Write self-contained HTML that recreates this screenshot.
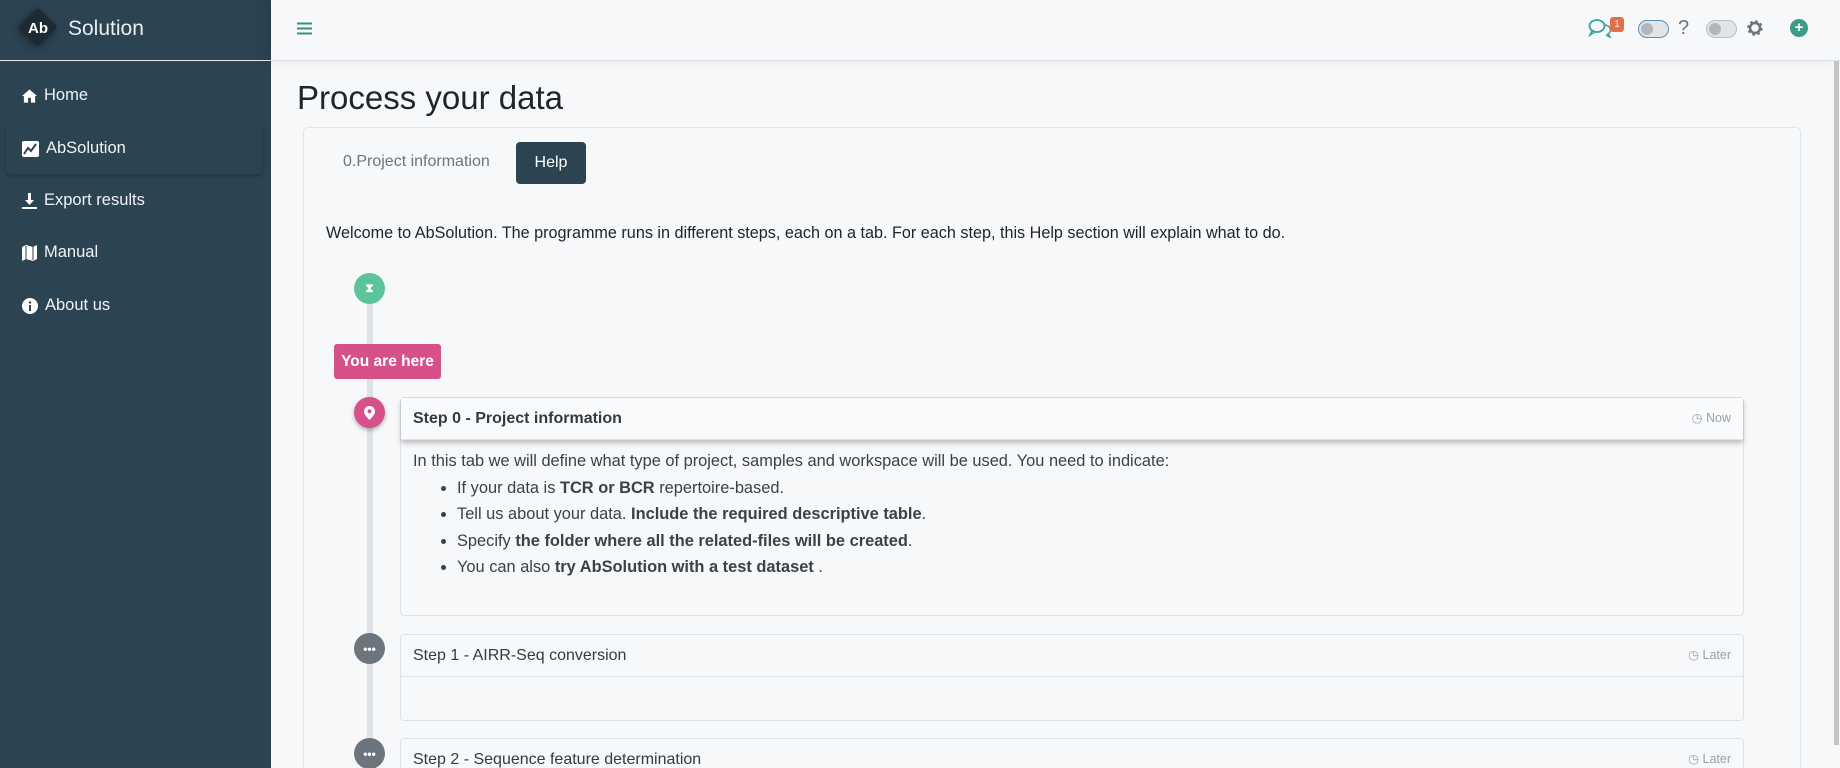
<!DOCTYPE html>
<html><head><meta charset="utf-8"><style>
*{box-sizing:border-box;margin:0;padding:0}
html,body{width:1840px;height:768px;overflow:hidden}
body{background:#f7f8fa;font-family:"Liberation Sans",sans-serif;color:#343a40;position:relative}
.sb{position:absolute;left:0;top:0;width:271px;height:768px;background:#2c4352;color:#fff}
.logo{height:61px;border-bottom:1px solid #e6e9ec;position:relative}
.logo .d{position:absolute;left:24px;top:13px;width:28px;height:28px;background:#1c2a33;transform:rotate(45deg);border-radius:3px;box-shadow:0 3px 8px rgba(0,0,0,.4)}
.logo .ab{position:absolute;left:28px;top:20px;font-weight:bold;font-size:15px}
.logo .t{position:absolute;left:68px;top:17px;font-size:21px;color:#e8eef2}
.mi{position:absolute;left:22px;font-size:16.5px;color:#f0f3f5;display:flex;align-items:center;gap:7px}
.act{position:absolute;left:6px;top:122px;width:256px;height:52px;border-radius:4px;box-shadow:0 2px 3px rgba(0,0,0,.25)}
.top{position:absolute;left:271px;top:0;right:0;height:61px;border-bottom:1px solid #dee2e6;box-shadow:-6px 0 10px rgba(0,0,0,.08)}
h1{position:absolute;left:297px;top:79px;font-weight:normal;font-size:33px;color:#212529}
.card{position:absolute;left:303px;top:127px;width:1498px;height:700px;border:1px solid #e1e4e8;border-radius:5px;background:#f7f8fa}
.tab{position:absolute;left:343px;top:153px;font-size:16px;color:#6c757d}
.help{position:absolute;left:516px;top:142px;width:70px;height:42px;background:#2c4352;color:#fff;border-radius:4px;font-size:16px;text-align:center;line-height:42px}
.wel{position:absolute;left:326px;top:224px;font-size:16.2px;color:#212529}
.line{position:absolute;left:367px;top:290px;width:6px;height:478px;background:#dee2e6}
.circ{position:absolute;width:31px;height:31px;border-radius:50%;color:#fff;display:flex;align-items:center;justify-content:center;font-weight:bold;font-size:12px}
.badge{position:absolute;left:334px;top:344px;width:107px;height:35px;background:#d6518a;color:#fff;font-weight:bold;font-size:15.5px;border-radius:3px;line-height:35px;text-align:center}
.sc{position:absolute;left:400px;width:1344px;border:1px solid #dee2e6;border-radius:4px;background:#f7f8fa;overflow:hidden}
.sh{height:42px;border-bottom:1px solid #dee2e6;padding-left:12px;line-height:41px;font-size:16px;position:relative}
.sh .r{position:absolute;right:12px;top:0;font-size:12.5px;color:#9aa0a6}
.bd{padding:8px 12px;font-size:16.4px;line-height:26.5px;color:#3b4148}
.bd ul{margin-left:44px}
</style></head><body>
<div class="sb">
 <div class="logo"><div class="d"></div><div class="ab">Ab</div><div class="t">Solution</div></div>
 <div class="act"></div>
 <div class="mi" style="top:86px"><svg width="15" height="14" viewBox="0 0 16 14"><path d="M8 0L0 7h2v7h4.5V9h3v5H14V7h2z" fill="#fff"/></svg>Home</div>
 <div class="mi" style="top:139px"><svg width="17" height="16" viewBox="0 0 17 16"><rect width="17" height="16" rx="2" fill="#fff"/><path d="M2 13l4-6 3 3 5-7" stroke="#2c4352" stroke-width="2" fill="none"/></svg>AbSolution</div>
 <div class="mi" style="top:191px"><svg width="15" height="16" viewBox="0 0 15 16"><path d="M6 0h3v7h3l-4.5 5L3 7h3z M0 14h15v2H0z" fill="#fff"/></svg>Export results</div>
 <div class="mi" style="top:243px"><svg width="15" height="16" viewBox="0 0 15 16"><path d="M0 2l4-2 7 2 4-2v14l-4 2-7-2-4 2z" fill="#fff"/><path d="M4 1v13M11 2v13" stroke="#2c4352" stroke-width="1"/></svg>Manual</div>
 <div class="mi" style="top:296px"><svg width="16" height="16" viewBox="0 0 16 16"><circle cx="8" cy="8" r="8" fill="#fff"/><rect x="7" y="7" width="2" height="6" fill="#2c4352"/><circle cx="8" cy="4.5" r="1.2" fill="#2c4352"/></svg>About us</div>
</div>
<div class="top">
 <svg style="position:absolute;left:26px;top:22px" width="15" height="13"><path d="M0 1.5h15M0 6.5h15M0 11.5h15" stroke="#3a8f86" stroke-width="2"/></svg>
 <svg style="position:absolute;left:1317px;top:18px" width="26" height="20" viewBox="0 0 26 20"><ellipse cx="9" cy="8" rx="7.5" ry="6" fill="none" stroke="#3aa3a0" stroke-width="1.8"/><path d="M4 13l-2 4 5-3" fill="none" stroke="#3aa3a0" stroke-width="1.6"/><path d="M17 7a6 5 0 0 1 3 9l2 3-4-2" fill="none" stroke="#3aa3a0" stroke-width="1.6"/></svg>
 <div style="position:absolute;left:1339px;top:17px;width:14px;height:15px;background:#e0704c;border-radius:3px;color:#fde;font-size:10px;text-align:center;line-height:15px">1</div>
 <div style="position:absolute;left:1367px;top:20px;width:31px;height:18px;border:1.5px solid #5b8fb6;border-radius:9px;background:#e2e5e8"><div style="position:absolute;left:2px;top:2px;width:12px;height:12px;border-radius:50%;background:#b2b7bd"></div></div>
 <div style="position:absolute;left:1407px;top:17px;font-size:20px;color:#6c757d">?</div>
 <div style="position:absolute;left:1435px;top:20px;width:31px;height:18px;border:1.5px solid #b9bec3;border-radius:9px;background:#e2e5e8"><div style="position:absolute;left:2px;top:2px;width:12px;height:12px;border-radius:50%;background:#b2b7bd"></div></div>
 <svg style="position:absolute;left:1475px;top:19px" width="18" height="18" viewBox="0 0 18 18"><circle cx="9" cy="9" r="6" fill="none" stroke="#6c757d" stroke-width="3.5" stroke-dasharray="2.4 2.3"/><circle cx="9" cy="9" r="5" fill="none" stroke="#6c757d" stroke-width="2.5"/></svg>
 <div style="position:absolute;left:1519px;top:19px;width:18px;height:18px;border-radius:50%;background:#3d9b86;color:#fff;font-size:15px;font-weight:bold;text-align:center;line-height:18px">+</div>
</div>
<div style="position:absolute;left:1834px;top:61px;width:5px;height:684px;background:#c4c6c8"></div>
<h1>Process your data</h1>
<div class="card" style="height:641px;border-bottom:none;border-radius:5px 5px 0 0"></div>
<div class="tab">0.Project information</div>
<div class="help">Help</div>
<div class="wel">Welcome to AbSolution. The programme runs in different steps, each on a tab. For each step, this Help section will explain what to do.</div>
<div class="line"></div>
<div class="circ" style="left:354px;top:273px;background:#5cc49a">⧗</div>
<div class="badge">You are here</div>
<div class="circ" style="left:354px;top:397px;background:#d6518a;box-shadow:0 2px 4px rgba(0,0,0,.3)"><svg width="11" height="14" viewBox="0 0 11 14"><path d="M5.5 0A5.5 5.5 0 0 0 0 5.5C0 9 5.5 14 5.5 14S11 9 11 5.5A5.5 5.5 0 0 0 5.5 0z" fill="#fff"/><circle cx="5.5" cy="5.3" r="2" fill="#d6518a"/></svg></div>
<div class="sc" style="top:397px;height:219px;overflow:visible">
 <div class="sh" style="font-weight:bold;background:#f9fafb;box-shadow:0 3px 5px rgba(0,0,0,.25)">Step 0 - Project information<span class="r" style="font-weight:normal">◷ Now</span></div>
 <div class="bd">In this tab we will define what type of project, samples and workspace will be used. You need to indicate:
 <ul><li>If your data is <b>TCR or BCR</b> repertoire-based.</li><li>Tell us about your data. <b>Include the required descriptive table</b>.</li><li>Specify <b>the folder where all the related-files will be created</b>.</li><li>You can also <b>try AbSolution with a test dataset</b> .</li></ul></div>
</div>
<div class="circ" style="left:354px;top:633px;background:#6c757d">•••</div>
<div class="sc" style="top:634px;height:87px"><div class="sh">Step 1 - AIRR-Seq conversion<span class="r">◷ Later</span></div></div>
<div class="circ" style="left:354px;top:738px;background:#6c757d">•••</div>
<div class="sc" style="top:738px;height:30px;border-bottom:none;border-radius:4px 4px 0 0"><div class="sh">Step 2 - Sequence feature determination<span class="r">◷ Later</span></div></div>
</body></html>
